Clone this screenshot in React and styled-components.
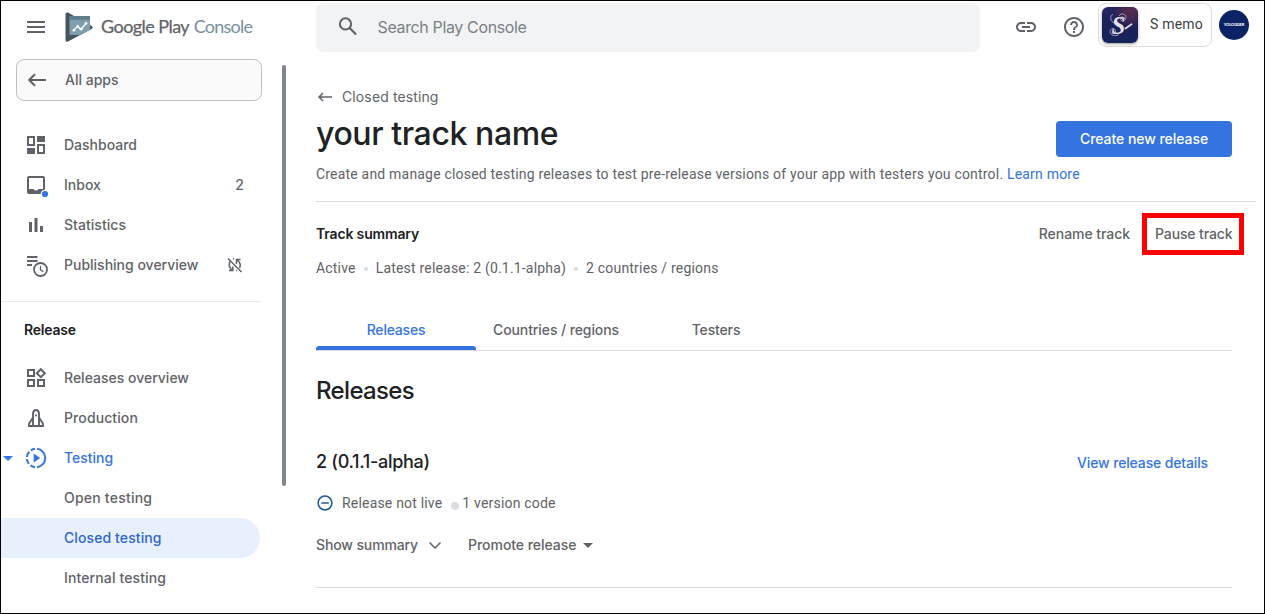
import React from "react";
import styled, { createGlobalStyle } from "styled-components";

const GlobalStyle = createGlobalStyle`
  * { box-sizing: border-box; }
  body { margin: 0; background: #fff; }
`;

const sans = `"Inter", "Liberation Sans", sans-serif`;
const roboto = `"Roboto", "Liberation Sans", sans-serif`;
const grey = "#5f6368";
const ink = "#202124";
const blue = "#3374e0";
const line = "#dadce0";

const Frame = styled.div`
  display: flex;
  width: 1265px;
  height: 614px;
  border: 1px solid #000;
  overflow: hidden;
  background: #fff;
  color: ${grey};
  font: 500 14px/20px ${sans};
  white-space: nowrap;
`;

const Label = styled.span`
  letter-spacing: ${(p) => p.$track || 0}px;
`;

/* Sidebar */
const Sidebar = styled.aside`
  width: 281px;
  flex: none;
  display: flex;
  flex-direction: column;
`;
const Brand = styled.div`
  height: 58px;
  flex: none;
  padding: 0 0 6px 23px;
  display: flex;
  align-items: center;
`;
const LogoSlot = styled.div`
  display: flex;
  margin: 0 6px 0 13px;
`;
const BrandName = styled.div`
  padding-bottom: 2px;
  font: 400 18px/24px "Lato", sans-serif;
  letter-spacing: -0.55px;
  color: #5f6368;
  -webkit-text-stroke: 0.25px currentColor;
`;
const BrandSuffix = styled.span`
  margin-left: 1px;
  letter-spacing: -0.75px;
  color: #78909c;
  -webkit-text-stroke: 0;
`;
const AllApps = styled.button`
  width: 246px;
  height: 42px;
  flex: none;
  margin: 0 0 24px 15px;
  padding: 0 0 0 8px;
  display: flex;
  align-items: center;
  gap: 16px;
  border: 1px solid #bdc1c6;
  border-radius: 8px;
  background: #fafafa;
  color: ${grey};
  font: 500 14px/20px ${sans};
`;
const NavItem = styled.a`
  position: relative;
  width: 259px;
  height: 40px;
  flex: none;
  padding: ${(p) => (p.$last ? 1 : 0)}px 16px 0 ${(p) => (p.$nested ? 63 : 23)}px;
  display: flex;
  align-items: center;
  gap: 16px;
  border-radius: 0 20px 20px 0;
  background: ${(p) => (p.$selected ? "#e8f0fe" : "transparent")};
  color: ${(p) => (p.$selected ? "#2f66d0" : p.$active ? blue : grey)};
`;
const NavEnd = styled.span`
  margin-left: auto;
  display: flex;
`;
const Caret = styled.svg`
  position: absolute;
  left: 2px;
  top: 18px;
`;
const NavRule = styled.div`
  width: 259px;
  height: 1px;
  flex: none;
  margin-top: 16px;
  background: #e8eaed;
`;
const NavHeading = styled.div`
  height: 56px;
  flex: none;
  padding: 18px 0 0 23px;
  font-weight: 600;
  letter-spacing: -0.2px;
  color: ${ink};
`;
const ScrollThumb = styled.div`
  width: 4px;
  height: 421px;
  flex: none;
  margin: 64px 30px 0 0;
  border-radius: 2px;
  background: #80868b;
`;
const Icon = styled.svg`
  width: 24px;
  height: 24px;
  flex: none;
  overflow: visible;
`;

/* Top bar */
const Main = styled.main`
  flex: 1;
  min-width: 0;
`;
const TopBar = styled.header`
  height: 64px;
  padding-top: 2px;
  display: flex;
  align-items: flex-start;
`;
const Search = styled.div`
  width: 664px;
  height: 49px;
  padding: 0 0 1px 20px;
  display: flex;
  align-items: center;
  gap: 17.5px;
  border-radius: 8px;
  background: #f1f3f4;
  color: #7c8085;
  font: 400 16px/24px ${sans};
`;
const TopIcons = styled.div`
  display: flex;
  gap: 24px;
  margin: 12px 12px 0 34px;
`;
const AppChip = styled.div`
  width: 114px;
  height: 44px;
  padding: 0 0 2px 3px;
  display: flex;
  align-items: center;
  gap: 12px;
  border: 1px solid ${line};
  border-radius: 8px;
  color: #3c4043;
  font: 400 14px/20px ${roboto};
`;
const AppIcon = styled.svg`
  width: 36px;
  height: 36px;
  margin-top: 2px;
  border-radius: 6px;
  box-shadow: 0 1px 3px rgba(0, 0, 0, 0.4);
`;
const Avatar = styled.div`
  width: 30px;
  height: 30px;
  margin: 7px 0 0 7px;
  display: grid;
  place-items: center;
  border-radius: 50%;
  background: #0b2265;
  color: #fff;
  font: 900 4px/6px "Lato", sans-serif;
  letter-spacing: -0.15px;
`;

/* Page */
const Crumb = styled.div`
  height: 20px;
  margin-top: 22px;
  display: flex;
  align-items: center;
  gap: 8px;
  font-weight: 400;
`;
const Spread = styled.div`
  display: flex;
  justify-content: space-between;
  align-items: flex-start;
  padding-right: ${(p) => p.$inset || 32}px;
`;
const Title = styled.h1`
  margin: 7px 0 0;
  font: 500 32px/40px ${sans};
  letter-spacing: -0.4px;
  color: ${ink};
`;
const Primary = styled.button`
  width: 176px;
  height: 36px;
  margin-top: 14px;
  padding: 0;
  border: 0;
  border-radius: 4px;
  background: ${blue};
  color: #fff;
  font: 500 14px/20px ${sans};
  letter-spacing: -0.05px;
`;
const Copy = styled.p`
  margin: 7px 0 0;
  font: 400 14px/20px ${roboto};
  letter-spacing: 0.195px;
`;
const Link = styled.a`
  color: ${blue};
  letter-spacing: ${(p) => p.$track ?? 0.2}px;
`;
const Rule = styled.hr`
  height: 1px;
  margin: ${(p) => p.$top}px ${(p) => p.$right}px 0 0;
  border: 0;
  background: ${line};
`;
const Summary = styled(Spread)`
  margin-top: 22px;
`;
const SummaryTitle = styled.h2`
  margin: 0;
  font: 600 14px/20px ${sans};
  letter-spacing: -0.16px;
  color: ${ink};
`;
const Actions = styled.div`
  display: flex;
  gap: 25px;
`;
const Highlighted = styled.span`
  position: relative;
  width: 77px;
  letter-spacing: -0.12px;
  &::after {
    content: "";
    position: absolute;
    inset: -11px -12px -11px -13px;
    border: 5px solid #fe0000;
  }
`;
const Status = styled.div`
  display: flex;
  align-items: center;
  margin-top: ${(p) => p.$top}px;
  font: 400 14px/20px ${roboto};
  letter-spacing: 0.19px;
`;
const Dot = styled.i`
  width: ${(p) => p.$size}px;
  height: ${(p) => p.$size}px;
  margin: ${(p) => p.$margin};
  border-radius: 50%;
  background: ${line};
`;
const StatusIcon = styled.svg`
  width: 18px;
  height: 18px;
  margin-right: 8px;
`;
const Tabs = styled.div`
  display: flex;
  height: 41px;
  margin: 32px 32px 0 0;
  border-bottom: 1px solid ${line};
`;
const Tab = styled.div`
  width: 160px;
  display: flex;
  flex-direction: column;
  align-items: center;
  padding-top: 10px;
  color: ${(p) => (p.$active ? blue : grey)};
  &::after {
    content: "";
    width: 100%;
    height: 4px;
    margin-top: 6px;
    border-radius: 3px 3px 0 0;
    background: ${(p) => (p.$active ? blue : "transparent")};
  }
`;
const SectionTitle = styled.h2`
  margin: 24px 0 0;
  font: 500 24px/32px ${sans};
  letter-spacing: -0.65px;
  color: ${ink};
`;
const ReleaseHead = styled(Spread)`
  margin-top: 43px;
  align-items: flex-end;
`;
const ReleaseTitle = styled.h3`
  margin: 0;
  font: 500 18px/24px ${sans};
  letter-spacing: -0.3px;
  color: ${ink};
`;
const ReleaseLink = styled(Link)`
  margin-bottom: 1px;
`;
const ReleaseActions = styled.div`
  display: flex;
  align-items: center;
  margin-top: 22px;
`;
const Toggle = styled.span`
  display: flex;
  align-items: center;
  gap: ${(p) => p.$gap}px;
  margin-right: 27px;
`;

const Logo = () => (
  <svg width="34" height="32" viewBox="0 0 34 32">
    <path d="M4.500 3v26.200q.5 2.300 2.500 1.200L31 17.800q1.500-1.300 0-2.600L7 1.600Q5 .8 4.500 3z" fill="#455560" />
    <path d="M8.500 5H29v13.500L19.500 24h-11z" fill="#7f9dad" />
    <path d="M8.500 5H29v3.700H8.500z" fill="#5f7d8b" />
    <path d="M12.500 19.500l4-4.200 3.500 3 5.500-6.300" fill="none" stroke="#fff" strokeWidth="1.300" />
    <g fill="#fff"><circle cx="12.800" cy="19.300" r="1.400" /><circle cx="16.700" cy="15.500" r="1.400" /><circle cx="20.100" cy="18.200" r="1.400" /><circle cx="25" cy="12.400" r="1.400" /></g>
  </svg>
);
const MenuIcon = () => <Icon viewBox="0 0 24 24"><path fill="currentColor" d="M3 18h18v-2H3v2zm0-5h18v-2H3v2zm0-7v2h18V6H3z" /></Icon>;
const BackIcon = () => <Icon viewBox="0 0 24 24"><path d="M21 12H4.500M10 6.200 4.200 12l5.800 5.800" fill="none" stroke="currentColor" strokeWidth="2" /></Icon>;
const DashboardIcon = () => <Icon viewBox="0 0 24 24"><path fill="currentColor" fillRule="evenodd" d="M3 3h8v10H3zm2 2v6h4V5zM13 3h8v6h-8zM3 15h8v6H3zM13 11h8v10h-8zm2 2v6h4v-6z" /></Icon>;
const InboxIcon = () => (
  <Icon viewBox="0 0 24 24">
    <path fill="currentColor" fillRule="evenodd" d="M5 3h14a2 2 0 0 1 2 2v14a2 2 0 0 1-2 2H5a2 2 0 0 1-2-2V5a2 2 0 0 1 2-2zm0 2v11h4.500q.9 1.500 2.500 1.500t2.500-1.500H19V5z" />
    <circle cx="21" cy="21" r="4.300" fill="#fff" />
    <circle cx="21" cy="21" r="3.100" fill="#3374e0" />
  </Icon>
);
const StatsIcon = () => <Icon viewBox="0 0 24 24"><path fill="currentColor" d="M5 9h3v10H5zM10.500 5h3v14h-3zM16 13h3v6h-3z" /></Icon>;
const PublishingIcon = () => (
  <Icon viewBox="0 0 24 24">
    <path d="M3 4h10.500M3 8h10.500M3 12h5" stroke="currentColor" strokeWidth="2" />
    <circle cx="16.500" cy="16.500" r="6.500" fill="#fff" stroke="currentColor" strokeWidth="1.800" />
    <path d="M16.500 12.800v4l2.800 2" fill="none" stroke="currentColor" strokeWidth="1.300" />
  </Icon>
);
const SyncOffIcon = () => (
  <svg width="18" height="18" viewBox="0 0 18 18" fill="none" stroke="currentColor" strokeWidth="1.500">
    <path d="M2 2.500l13.500 13.500" />
    <path d="M4 5.500C2.600 8.500 3 11.300 5.800 14M3 14.500h3.800v-4M7 3.200l1-.5M10.500 8V3.500h4M11.300 4c3 2.600 3.600 5.500 2.300 8.200M10 14.700l.8-.4" />
  </svg>
);
const ReleasesIcon = () => <Icon viewBox="0 0 24 24"><path fill="none" stroke="currentColor" strokeWidth="2" d="M4 4h6v6H4zM4 14h6v6H4zM14 14h6v6h-6zM16.800 3.200l4 4-4 4-4-4z" /></Icon>;
const RocketIcon = () => (
  <Icon viewBox="0 0 24 24">
    <path fill="none" stroke="currentColor" strokeWidth="1.900" d="M9 20V7.500Q9.300 4 12 4t3 3.500V20M9 11.500 5 17.800V20h14v-2.200l-4-6.300" />
    <circle cx="12" cy="9.500" r="1.100" fill="currentColor" />
  </Icon>
);
const TestingIcon = () => (
  <Icon viewBox="0 0 24 24">
    <path fill="none" stroke="currentColor" strokeWidth="2" d="M13 2.850A9.200 9.200 0 0 1 13 21.150M11 2.850A9.200 9.200 0 0 0 6.900 4.350M5.300 5.750A9.200 9.200 0 0 0 2.900 11M2.900 13a9.200 9.200 0 0 0 2 4.800M6.500 19.400A9.200 9.200 0 0 0 11 21.150" />
    <path fill="currentColor" d="M9.700 7.600v8.800l6.500-4.400z" />
  </Icon>
);
const SearchIcon = () => <Icon viewBox="0 0 24 24"><g fill="none" stroke="#5f6368" strokeWidth="2"><circle cx="9.500" cy="8.900" r="5.600" /><path d="M13.600 13l6.500 6.500" strokeWidth="2.200" /></g></Icon>;
const LinkIcon = () => <Icon viewBox="0 0 24 24"><path fill="currentColor" d="M3.900 12c0-1.710 1.390-3.100 3.100-3.100h4V7H7c-2.760 0-5 2.240-5 5s2.240 5 5 5h4v-1.900H7c-1.710 0-3.100-1.390-3.100-3.100zM8 13h8v-2H8v2zm9-6h-4v1.900h4c1.710 0 3.100 1.390 3.100 3.100s-1.390 3.100-3.100 3.100h-4V17h4c2.760 0 5-2.240 5-5s-2.240-5-5-5z" /></Icon>;
const HelpIcon = () => <Icon viewBox="0 0 24 24"><path fill="currentColor" d="M11 18h2v-2h-2v2zm1-16C6.480 2 2 6.480 2 12s4.480 10 10 10 10-4.480 10-10S17.520 2 12 2zm0 18c-4.410 0-8-3.590-8-8s3.590-8 8-8 8 3.590 8 8-3.590 8-8 8zm0-14c-2.210 0-4 1.790-4 4h2c0-1.100.9-2 2-2s2 .9 2 2c0 2-3 1.750-3 5h2c0-2.250 3-2.500 3-5 0-2.210-1.790-4-4-4z" /></Icon>;

const MemoIcon = () => (
  <AppIcon viewBox="0 0 36 36">
    <defs>
      <linearGradient id="memo" x1="0" y1="0" x2="0" y2="1">
        <stop offset="0" stopColor="#2a2463" />
        <stop offset="0.500" stopColor="#1d2058" />
        <stop offset="1" stopColor="#14245c" />
      </linearGradient>
      <radialGradient id="memoGlow" cx="0.800" cy="0.100" r="0.500">
        <stop offset="0" stopColor="#5a2c4c" />
        <stop offset="1" stopColor="#5a2c4c" stopOpacity="0" />
      </radialGradient>
    </defs>
    <rect width="36" height="36" fill="url(#memo)" />
    <rect width="36" height="36" fill="url(#memoGlow)" />
    <text x="9.500" y="27" fill="#e4e2ea" fontFamily="Liberation Serif, serif" fontStyle="italic" fontWeight="700" fontSize="25">S</text>
    <g fill="none" stroke="#b9b5cc" strokeWidth="0.800">
      <path d="M12.500 16C8 15 7.500 7.500 11 7.500M17 9c2-3.500 7-2.500 7 1.500s-5.500 4.500-5.500 1.500 4-2.500 3.500 0" />
      <path d="M17 27.500c-4 2.500-9 .5-9-3s5-4 5.500-1-3.500 3-3 .8" />
    </g>
    <path d="M23.500 21.500l6-4.300" stroke="#d9d7e2" strokeWidth="1.900" strokeLinecap="round" />
  </AppIcon>
);

const overview = [
  { text: "Dashboard", icon: <DashboardIcon /> },
  { text: "Inbox", icon: <InboxIcon />, end: "2" },
  { text: "Statistics", icon: <StatsIcon />, track: 0.05 },
  { text: "Publishing overview", icon: <PublishingIcon />, end: <SyncOffIcon /> },
];
const release = [
  { text: "Releases overview", icon: <ReleasesIcon /> },
  { text: "Production", icon: <RocketIcon />, track: 0.1 },
  { text: "Testing", icon: <TestingIcon />, active: true },
  { text: "Open testing", nested: true, track: 0.22 },
  { text: "Closed testing", nested: true, selected: true, track: 0.1 },
  { text: "Internal testing", nested: true, track: 0.12 },
  { text: "Pre-registration", nested: true, last: true },
];

const NavRow = ({ item }) => (
  <NavItem $nested={item.nested} $selected={item.selected} $active={item.active} $last={item.last}>
    {item.active && <Caret width="10" height="5" viewBox="0 0 10 5"><path d="M0 0h10L5 5z" fill="currentColor" /></Caret>}
    {item.icon}
    <Label $track={item.track}>{item.text}</Label>
    {item.end && <NavEnd>{item.end}</NavEnd>}
  </NavItem>
);

export default function App() {
  return (
    <Frame>
      <GlobalStyle />
      <Sidebar>
        <Brand>
          <MenuIcon />
          <LogoSlot><Logo /></LogoSlot>
          <BrandName>Google Play <BrandSuffix>Console</BrandSuffix></BrandName>
        </Brand>
        <AllApps><BackIcon /><Label>All apps</Label></AllApps>
        {overview.map((item) => <NavRow key={item.text} item={item} />)}
        <NavRule />
        <NavHeading>Release</NavHeading>
        {release.map((item) => <NavRow key={item.text} item={item} />)}
      </Sidebar>
      <ScrollThumb />
      <Main>
        <TopBar>
          <Search><SearchIcon /><Label $track={-0.36}>Search Play Console</Label></Search>
          <TopIcons><LinkIcon /><HelpIcon /></TopIcons>
          <AppChip><MemoIcon /><Label $track={0.2}>S memo</Label></AppChip>
          <Avatar>YOLOGGER</Avatar>
        </TopBar>
        <Crumb>
          <svg width="18" height="18" viewBox="0 0 18 18"><path d="M16 9H3M7 5 3 9l4 4" fill="none" stroke="currentColor" strokeWidth="1.500" /></svg>
          <Label $track={0.12}>Closed testing</Label>
        </Crumb>
        <Spread>
          <Title>your track name</Title>
          <Primary>Create new release</Primary>
        </Spread>
        <Copy>
          Create and manage closed testing releases to test pre-release versions of your app with testers you control. <Link>Learn more</Link>
        </Copy>
        <Rule $top={17} $right={8} />
        <Summary>
          <SummaryTitle>Track summary</SummaryTitle>
          <Actions><Label $track={-0.05}>Rename track</Label><Highlighted>Pause track</Highlighted></Actions>
        </Summary>
        <Status $top={14}>
          Active<Dot $size={4} $margin="1px 8px 0" />Latest release: 2 (0.1.1-alpha)<Dot $size={4} $margin="1px 8px 0" />2 countries / regions
        </Status>
        <Tabs>
          <Tab $active><Label $track={-0.2}>Releases</Label></Tab>
          <Tab><Label $track={-0.1}>Countries / regions</Label></Tab>
          <Tab><Label $track={-0.15}>Testers</Label></Tab>
        </Tabs>
        <SectionTitle>Releases</SectionTitle>
        <ReleaseHead $inset={56}>
          <ReleaseTitle>2 (0.1.1-alpha)</ReleaseTitle>
          <ReleaseLink $track={-0.14}>View release details</ReleaseLink>
        </ReleaseHead>
        <Status $top={19}>
          <StatusIcon viewBox="0 0 18 18"><g fill="none" stroke="#1f5a92" strokeWidth="1.500"><circle cx="9" cy="9" r="6.900" /><path d="M5.300 9h7.400" /></g></StatusIcon>
          Release not live<Dot $size={8} $margin="5px 3px 0 9px" />1 version code
        </Status>
        <ReleaseActions>
          <Toggle $gap={11}>
            <Label $track={-0.12}>Show summary</Label>
            <svg width="12" height="7" viewBox="0 0 12 7"><path d="M.5.500 6 6 11.500.500" fill="none" stroke="currentColor" strokeWidth="1.500" /></svg>
          </Toggle>
          <Toggle $gap={7}>
            <Label $track={-0.05}>Promote release</Label>
            <svg width="10" height="5" viewBox="0 0 10 5"><path d="M0 0h10L5 5z" fill="currentColor" /></svg>
          </Toggle>
        </ReleaseActions>
        <Rule $top={32} $right={32} />
      </Main>
    </Frame>
  );
}
